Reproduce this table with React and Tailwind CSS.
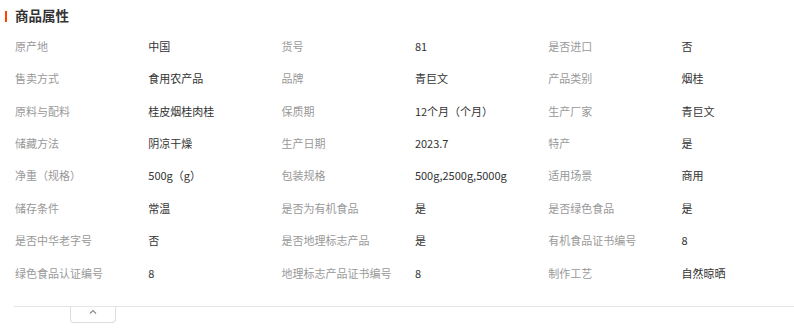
import React from "react";

const rows = [
  ["原产地", "中国", "货号", "81", "是否进口", "否"],
  ["售卖方式", "食用农产品", "品牌", "青巨文", "产品类别", "烟桂"],
  ["原料与配料", "桂皮烟桂肉桂", "保质期", "12个月（个月）", "生产厂家", "青巨文"],
  ["储藏方法", "阴凉干燥", "生产日期", "2023.7", "特产", "是"],
  ["净重（规格）", "500g（g）", "包装规格", "500g,2500g,5000g", "适用场景", "商用"],
  ["储存条件", "常温", "是否为有机食品", "是", "是否绿色食品", "是"],
  ["是否中华老字号", "否", "是否地理标志产品", "是", "有机食品证书编号", "8"],
  ["绿色食品认证编号", "8", "地理标志产品证书编号", "8", "制作工艺", "自然晾晒"],
];

export default function App() {
  return (
    <div
      className="w-[794px] h-[332px] bg-white overflow-hidden"
      style={{ fontFamily: '"Noto Sans CJK SC", "Noto Sans", sans-serif' }}
    >
      <div className="h-[32px] flex items-center">
        <div className="ml-[5px] w-[2px] h-[11px] bg-[#ff4400]" />
        <div className="ml-[8px] text-[13.5px] font-bold text-[#333] leading-none">商品属性</div>
      </div>
      <div className="mt-[-2px] pl-[15px] grid grid-cols-[133.3px_133.3px_133.3px_133.3px_133.3px_133.3px] auto-rows-[32.43px] text-[11px] leading-none">
        {rows.map((r, i) =>
          r.map((t, j) => (
            <div
              key={i + "-" + j}
              className={
                "flex items-center whitespace-nowrap " +
                (j % 2 === 0 ? "text-[#999]" : "text-[#333]")
              }
            >
              {t}
            </div>
          ))
        )}
      </div>
      <div className="mt-[17px] ml-[14px] border-t border-[#e5e5e5]" />
      <div className="ml-[70px] w-[46px] h-[16px] border border-t-0 border-[#dddddd] rounded-b-[4px] flex justify-center pt-[2px]">
        <svg width="8" height="5" viewBox="0 0 8 5" fill="none">
          <path d="M1 4.5 L4 1.5 L7 4.5" stroke="#888" strokeWidth="1.1" />
        </svg>
      </div>
    </div>
  );
}
